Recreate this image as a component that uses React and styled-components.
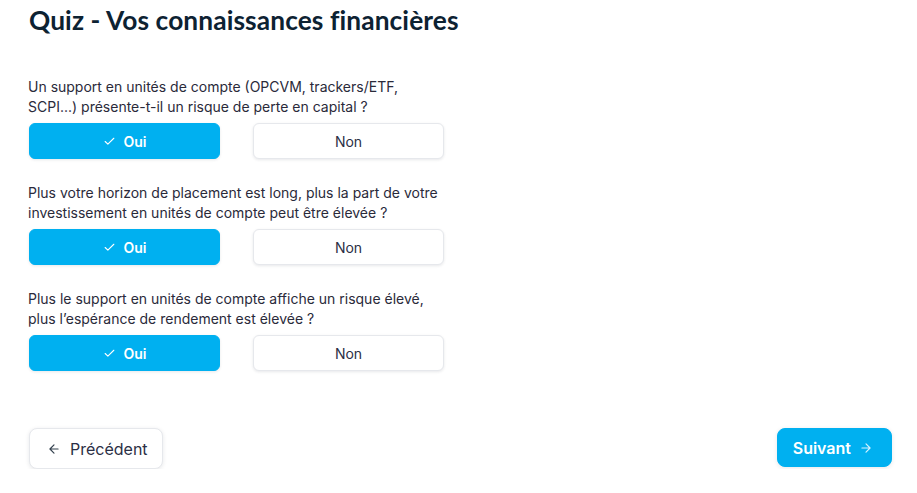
import React, { useState } from "react";
import styled, { createGlobalStyle } from "styled-components";

const questions = [
  "Un support en unités de compte (OPCVM, trackers/ETF, SCPI...) présente-t-il un risque de perte en capital ?",
  "Plus votre horizon de placement est long, plus la part de votre investissement en unités de compte peut être élevée ?",
  "Plus le support en unités de compte affiche un risque élevé, plus l’espérance de rendement est élevée ?",
];

const Check = () => (
  <svg width="13" height="13" viewBox="0 0 24 24" fill="none" stroke="currentColor" strokeWidth="2" strokeLinecap="round" strokeLinejoin="round">
    <path d="M20 6 9 17l-5-5" />
  </svg>
);

const Arrow = ({ left }) => (
  <svg width="14" height="14" viewBox="0 0 24 24" fill="none" stroke="currentColor" strokeWidth="2" strokeLinecap="round" strokeLinejoin="round">
    {left ? <path d="M19 12H5M12 19l-7-7 7-7" /> : <path d="M5 12h14M12 5l7 7-7 7" />}
  </svg>
);

const App = () => {
  const [answers, setAnswers] = useState(["oui", "oui", "oui"]);

  const pick = (i, v) => {
    const next = [...answers];
    next[i] = v;
    setAnswers(next);
  };

  return (
    <>
      <GlobalStyle />
      <Page>
        <Title>Quiz - Vos connaissances financières</Title>
        <Questions>
          {questions.map((q, i) => (
            <Question key={i}>
              <Label>{q}</Label>
              <Choices>
                <Choice active={answers[i] === "oui"} onClick={() => pick(i, "oui")}>
                  {answers[i] === "oui" && <Check />}
                  Oui
                </Choice>
                <Choice active={answers[i] === "non"} onClick={() => pick(i, "non")}>
                  {answers[i] === "non" && <Check />}
                  Non
                </Choice>
              </Choices>
            </Question>
          ))}
        </Questions>
        <Footer>
          <NavButton>
            <Arrow left />
            Précédent
          </NavButton>
          <NavButton primary>
            Suivant
            <Arrow />
          </NavButton>
        </Footer>
      </Page>
    </>
  );
};

const GlobalStyle = createGlobalStyle`
  body {
    margin: 0;
    background: #fff;
    font-family: Inter, "Noto Sans", sans-serif;
  }
  * { box-sizing: border-box; }
`;

const Page = styled.div`
  padding: 3px 25px 0 29px;
  width: 917px;
`;

const Title = styled.h1`
  margin: 0;
  font-family: Lato, "Open Sans", sans-serif;
  font-weight: 700;
  font-size: 26.3px;
  line-height: 34px;
  color: #0d2232;
  letter-spacing: 0.1px;
`;

const Questions = styled.div`
  margin-top: 40px;
  display: flex;
  flex-direction: column;
  gap: 24px;
  width: 415px;
`;

const Question = styled.div`
  display: flex;
  flex-direction: column;
  gap: 6px;
`;

const Label = styled.p`
  margin: 0;
  margin-left: -1px;
  font-size: 14px;
  line-height: 20px;
  color: #2a2a3a;
`;

const Choices = styled.div`
  display: flex;
  gap: 33px;
`;

const Choice = styled.button`
  flex: 1;
  height: 36px;
  display: flex;
  align-items: center;
  justify-content: center;
  gap: 8px;
  border-radius: 6px;
  font-family: Inter, sans-serif;
  font-size: 14px;
  font-weight: ${(p) => (p.active ? 600 : 400)};
  cursor: pointer;
  border: 1px solid ${(p) => (p.active ? "#00b0f0" : "#e6e8ec")};
  background: ${(p) => (p.active ? "#00b0f0" : "#fff")};
  color: ${(p) => (p.active ? "#fff" : "#2b2f45")};
  box-shadow: 0 1px 3px rgba(20, 30, 50, 0.1);
`;

const Footer = styled.div`
  margin-top: 57px;
  display: flex;
  justify-content: space-between;
  align-items: flex-start;
`;

const NavButton = styled.button`
  display: flex;
  align-items: center;
  gap: ${(p) => (p.primary ? "8px" : "9px")};
  height: ${(p) => (p.primary ? "39px" : "41px")};
  padding: ${(p) => (p.primary ? "0 18px 0 15px" : "0 14px 0 17px")};
  border-radius: 8px;
  font-family: Inter, sans-serif;
  font-size: 16px;
  font-weight: ${(p) => (p.primary ? 600 : 400)};
  cursor: pointer;
  border: 1px solid ${(p) => (p.primary ? "#00b0f0" : "#e6e8ec")};
  background: ${(p) => (p.primary ? "#00b0f0" : "#fff")};
  color: ${(p) => (p.primary ? "#fff" : "#2b2f45")};
  box-shadow: 0 1px 4px rgba(20, 30, 50, 0.1);
  svg {
    color: ${(p) => (p.primary ? "#d6f2ff" : "#33404d")};
  }
`;

export default App;
